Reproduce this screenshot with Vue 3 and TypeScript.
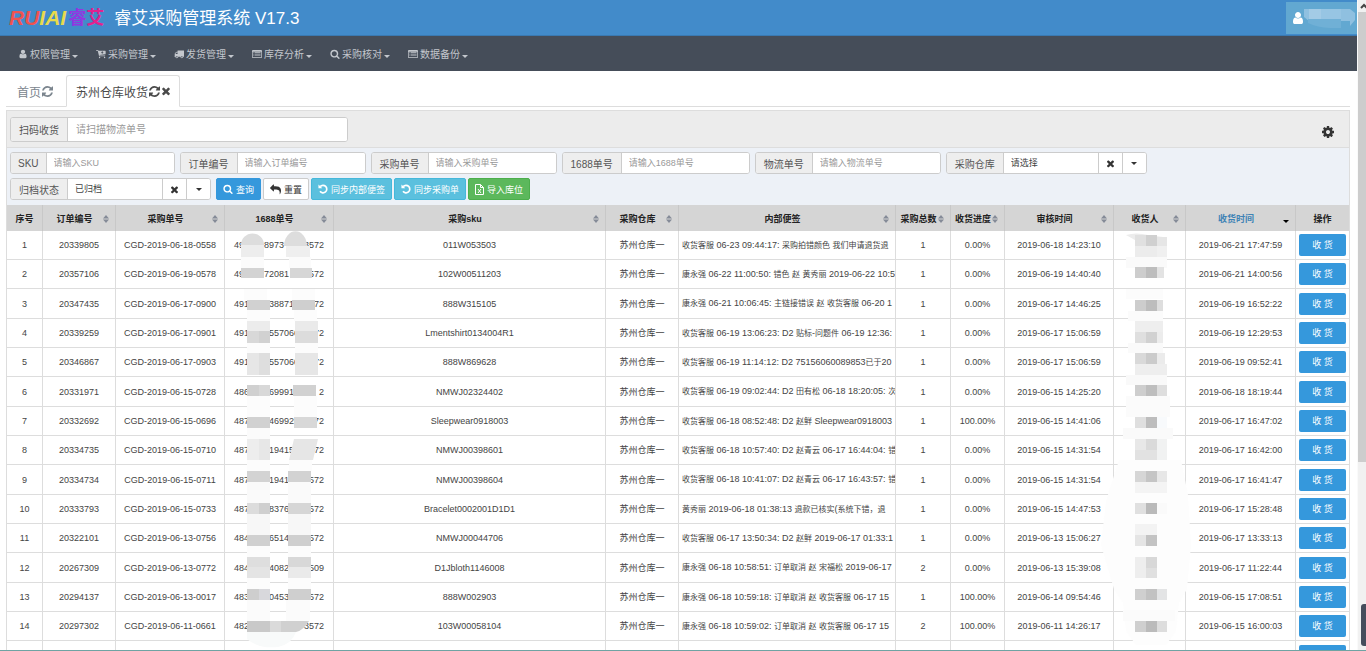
<script setup lang="ts">
import { ref } from 'vue'

type IconName = 'user' | 'cart' | 'truck' | 'list' | 'search'

interface NavItem { icon: IconName; label: string }
interface Field { id: string; label: string; hint: string }
interface Column { key: string; label: string; sortable: boolean }
interface Row {
  order: string
  purchase: string
  head: string
  mid: string
  tail: string
  sku: string
  memo: string
  total: string
  progress: string
  audit: string
  received: string
  early?: boolean
}
type Block = [number, number, number, number, string]

const paths: Record<string, string> = {
  user: 'M1536 1399q0 109-62.5 187t-150.5 78h-854q-88 0-150.5-78t-62.5-187q0-85 8.5-160.5t31.5-152 58.5-131 94-89 134.5-34.5q131 128 313 128t313-128q76 0 134.5 34.5t94 89 58.5 131 31.5 152 8.5 160.5zm-256-887q0 159-112.5 271.5t-271.5 112.5-271.5-112.5-112.5-271.5 112.5-271.5 271.5-112.5 271.5 112.5 112.5 271.5z',
  cart: 'M64 192h300q50 0 60 56l14 72h1226q64 0 64 64v512q0 56-58 64l-1044 122 20 70h954q64 0 64 64t-64 64H600q-58 0-70-60L310 320H64q-64 0-64-64t64-64zM1050 400v180H870l250 250 250-250h-180V400zM640 1408a128 128 0 1 1 0 256 128 128 0 0 1 0-256zM1536 1408a128 128 0 1 1 0 256 128 128 0 0 1 0-256z',
  truck: 'M640 1408q0-52-38-90t-90-38-90 38-38 90 38 90 90 38 90-38 38-90zm-384-512h384v-256h-158q-13 0-22 9l-195 195q-9 9-9 22v30zm1280 512q0-52-38-90t-90-38-90 38-38 90 38 90 90 38 90-38 38-90zm256-1088v1024q0 15-4 26.5t-13.5 18.5-16.5 11.5-23.5 6-22.5 2-25.5 0-22.5-.5q0 106-75 181t-181 75-181-75-75-181h-384q0 106-75 181t-181 75-181-75-75-181h-64q-3 0-22.5.5t-25.5 0-22.5-2-23.5-6-16.5-11.5-13.5-18.5-4-26.5q0-26 19-45t45-19v-320q0-8-.5-35t0-38 2.5-34.5 6.5-37 14-30.5 22.5-30l198-198q19-19 50.5-32t58.5-13h160v-192q0-26 19-45t45-19h1024q26 0 45 19t19 45z',
  list: 'M160 192h1472q160 0 160 160v1088q0 160-160 160H160q-160 0-160-160V352q0-160 160-160zM128 512v896q0 64 64 64h1408q64 0 64-64V512zM256 600h160v130H256zM512 600h1024v130H512zM256 850h160v130H256zM512 850h1024v130H512zM256 1100h160v130H256zM512 1100h1024v130H512z',
  search: 'M1216 832q0-185-131.5-316.5t-316.5-131.5-316.5 131.5-131.5 316.5 131.5 316.5 316.5 131.5 316.5-131.5 131.5-316.5zm512 832q0 52-38 90t-90 38q-54 0-90-38l-343-342q-179 124-399 124-143 0-273.5-55.5t-225-150-150-225-55.5-273.5 55.5-273.5 150-225 225-150 273.5-55.5 273.5 55.5 225 150 150 225 55.5 273.5q0 220-124 399l343 343q37 37 37 90z',
  refresh: 'M1639 1056q0 5-1 7-64 268-268 434.5t-478 166.5q-146 0-282.5-55t-243.5-157l-129 129q-19 19-45 19t-45-19-19-45v-448q0-26 19-45t45-19h448q26 0 45 19t19 45-19 45l-137 137q71 66 161 102t187 36q134 0 250-65t186-179q11-17 53-117 8-23 30-23h192q13 0 22.5 9.5t9.5 22.5zm25-800v448q0 26-19 45t-45 19h-448q-26 0-45-19t-19-45 19-45l138-138q-148-137-349-137-134 0-250 65t-186 179q-11 17-53 117-8 23-30 23h-199q-13 0-22.5-9.5t-9.5-22.5v-7q65-268 270-434.5t480-166.5q146 0 284 55.5t245 156.5l130-129q19-19 45-19t45 19 19 45z',
  times: 'M1490 1322q0 40-28 68l-136 136q-28 28-68 28t-68-28l-294-294-294 294q-28 28-68 28t-68-28l-136-136q-28-28-28-68t28-68l294-294-294-294q-28-28-28-68t28-68l136-136q28-28 68-28t68 28l294 294 294-294q28-28 68-28t68 28l136 136q28 28 28 68t-28 68l-294 294 294 294q28 28 28 68z',
  cog: 'M1152 896q0-106-75-181t-181-75-181 75-75 181 75 181 181 75 181-75 75-181zm512-109v222q0 12-8 23t-20 13l-185 28q-19 54-39 91 35 50 107 138 10 12 10 25t-9 23q-27 37-99 108t-94 71q-12 0-26-9l-138-108q-44 23-91 38-16 136-29 186-7 28-36 28h-222q-14 0-24.5-8.5t-11.5-21.5l-28-184q-49-16-90-37l-141 107q-10 9-25 9-14 0-25-11-126-114-165-168-7-10-7-23 0-12 8-23 15-21 51-66.5t54-70.5q-27-50-41-99l-183-27q-13-2-21-12.5t-8-23.5v-222q0-12 8-23t19-13l186-28q14-46 39-92-40-57-107-138-10-12-10-24 0-10 9-23 26-36 98.5-107.5t94.5-71.5q13 0 26 10l138 107q44-23 91-38 16-136 29-186 7-28 36-28h222q14 0 24.5 8.5t11.5 21.5l28 184q49 16 90 37l142-107q9-9 24-9 13 0 25 10 129 119 165 170 7 8 7 22 0 12-8 23-15 21-51 66.5t-54 70.5q26 50 41 98l183 28q13 2 21 12.5t8 23.5z',
  reply: 'M0 640q0 26 19 45l512 512q19 19 45 19t45-19 19-45V896h224q98 0 175.500 6t154 21.500 133 42.500 105.500 69.500 80 101 48.500 138.500 17.500 181q0 55-5 123 0 6-2.500 23.500t-2.500 26.500q0 15 8.500 25t23.500 10q16 0 28-17 7-9 13-22t13.500-30 10.500-24q127-285 127-451 0-199-53-333-162-403-875-403H640V128q0-26-19-45t-45-19-45 19L19 595q-19 19-19 45z',
}

const nav: NavItem[] = [
  { icon: 'user', label: '权限管理' },
  { icon: 'cart', label: '采购管理' },
  { icon: 'truck', label: '发货管理' },
  { icon: 'list', label: '库存分析' },
  { icon: 'search', label: '采购核对' },
  { icon: 'list', label: '数据备份' },
]

const fields: Field[] = [
  { id: 'sku', label: 'SKU', hint: '请输入SKU' },
  { id: 'order', label: '订单编号', hint: '请输入订单编号' },
  { id: 'purchase', label: '采购单号', hint: '请输入采购单号' },
  { id: 'ali', label: '1688单号', hint: '请输入1688单号' },
  { id: 'logistics', label: '物流单号', hint: '请输入物流单号' },
]

const columns: Column[] = [
  { key: 'no', label: '序号', sortable: false },
  { key: 'order', label: '订单编号', sortable: true },
  { key: 'purchase', label: '采购单号', sortable: true },
  { key: 'ali', label: '1688单号', sortable: true },
  { key: 'sku', label: '采购sku', sortable: true },
  { key: 'depot', label: '采购仓库', sortable: true },
  { key: 'memo', label: '内部便签', sortable: true },
  { key: 'total', label: '采购总数', sortable: true },
  { key: 'progress', label: '收货进度', sortable: true },
  { key: 'audit', label: '审核时间', sortable: true },
  { key: 'person', label: '收货人', sortable: true },
  { key: 'received', label: '收货时间', sortable: true },
  { key: 'action', label: '操作', sortable: false },
]
const sortKey = ref('received')

// Splits a note into Chinese and Latin runs, which are set in different sizes.
const runs = (memo: string): { text: string; han: boolean }[] =>
  (memo.match(/[\u4e00-\u9fff，]+|[^\u4e00-\u9fff，]+/g) ?? []).map((text) => ({
    text,
    han: /[\u4e00-\u9fff，]/.test(text),
  }))

const rows: Row[] = [
  { order: '20339805', purchase: 'CGD-2019-06-18-0558', head: '49', mid: '8973', tail: '3572', sku: '011W053503', memo: '收货客服 06-23 09:44:17: 采购拍错颜色 我们申请退货退', total: '1', progress: '0.00%', audit: '2019-06-18 14:23:10', received: '2019-06-21 17:47:59', early: true },
  { order: '20357106', purchase: 'CGD-2019-06-19-0578', head: '49', mid: '72081', tail: '572', sku: '102W00511203', memo: '康永强 06-22 11:00:50: 错色 赵 黄秀丽 2019-06-22 10:5', total: '1', progress: '0.00%', audit: '2019-06-19 14:40:40', received: '2019-06-21 14:00:56', early: true },
  { order: '20347435', purchase: 'CGD-2019-06-17-0900', head: '491', mid: '38871', tail: '72', sku: '888W315105', memo: '康永强 06-21 10:06:45: 主链接错误 赵 收货客服 06-20 1', total: '1', progress: '0.00%', audit: '2019-06-17 14:46:25', received: '2019-06-19 16:52:22' },
  { order: '20339259', purchase: 'CGD-2019-06-17-0901', head: '491', mid: '557066', tail: '72', sku: 'Lmentshirt0134004R1', memo: '收货客服 06-19 13:06:23: D2 贴标-问题件 06-19 12:36:', total: '1', progress: '0.00%', audit: '2019-06-17 15:06:59', received: '2019-06-19 12:29:53' },
  { order: '20346867', purchase: 'CGD-2019-06-17-0903', head: '491', mid: '557060', tail: '72', sku: '888W869628', memo: '收货客服 06-19 11:14:12: D2 75156060089853已于20', total: '1', progress: '0.00%', audit: '2019-06-17 15:06:59', received: '2019-06-19 09:52:41' },
  { order: '20331971', purchase: 'CGD-2019-06-15-0728', head: '486', mid: '699910', tail: '2', sku: 'NMWJ02324402', memo: '收货客服 06-19 09:02:44: D2 田有松 06-18 18:20:05: 次', total: '1', progress: '0.00%', audit: '2019-06-15 14:25:20', received: '2019-06-18 18:19:44' },
  { order: '20332692', purchase: 'CGD-2019-06-15-0696', head: '487', mid: '469920', tail: '72', sku: 'Sleepwear0918003', memo: '收货客服 06-18 08:52:48: D2 赵鲜 Sleepwear0918003', total: '1', progress: '100.00%', audit: '2019-06-15 14:41:06', received: '2019-06-17 16:47:02' },
  { order: '20334735', purchase: 'CGD-2019-06-15-0710', head: '487', mid: '19415', tail: '72', sku: 'NMWJ00398601', memo: '收货客服 06-18 10:57:40: D2 赵青云 06-17 16:44:04: 错', total: '1', progress: '0.00%', audit: '2019-06-15 14:31:54', received: '2019-06-17 16:42:00' },
  { order: '20334734', purchase: 'CGD-2019-06-15-0711', head: '487', mid: '1941', tail: '572', sku: 'NMWJ00398604', memo: '收货客服 06-18 10:41:07: D2 赵青云 06-17 16:43:57: 错', total: '1', progress: '0.00%', audit: '2019-06-15 14:31:54', received: '2019-06-17 16:41:47' },
  { order: '20333793', purchase: 'CGD-2019-06-15-0733', head: '487', mid: '8376', tail: '572', sku: 'Bracelet0002001D1D1', memo: '黄秀丽 2019-06-18 01:38:13 退款已核实(系统下错，退', total: '1', progress: '0.00%', audit: '2019-06-15 14:47:53', received: '2019-06-17 15:28:48' },
  { order: '20322101', purchase: 'CGD-2019-06-13-0756', head: '484', mid: '6514', tail: '572', sku: 'NMWJ00044706', memo: '收货客服 06-17 13:50:34: D2 赵鲜 2019-06-17 01:33:1', total: '1', progress: '0.00%', audit: '2019-06-13 15:06:27', received: '2019-06-17 13:33:13' },
  { order: '20267309', purchase: 'CGD-2019-06-13-0772', head: '484', mid: '4082', tail: '509', sku: 'D1Jbloth1146008', memo: '康永强 06-18 10:58:51: 订单取消 赵 宋福松 2019-06-17', total: '2', progress: '0.00%', audit: '2019-06-13 15:39:08', received: '2019-06-17 11:22:44' },
  { order: '20294137', purchase: 'CGD-2019-06-13-0017', head: '483', mid: '0453', tail: '572', sku: '888W002903', memo: '康永强 06-18 10:59:18: 订单取消 赵 收货客服 06-17 15', total: '1', progress: '100.00%', audit: '2019-06-14 09:54:46', received: '2019-06-15 17:08:51' },
  { order: '20297302', purchase: 'CGD-2019-06-11-0661', head: '482', mid: '', tail: '3572', sku: '103W00058104', memo: '康永强 06-18 10:59:02: 订单取消 赵 收货客服 06-17 15', total: '2', progress: '100.00%', audit: '2019-06-11 14:26:17', received: '2019-06-15 16:00:03' },
]

// Privacy covers, measured from the first body row.
const aliBlocks: Block[] = [
  [17, 14, 23, 12, '#ededed'], [62, 15, 24, 11, '#efefef'],
  [17, 26, 23, 11, '#fbfbfb'], [65, 26, 22, 11, '#fbfbfb'],
  [17, 37, 23, 10, '#d3d3d3'], [66, 37, 22, 10, '#d6d6d6'],
  [20, 58, 23, 11, '#fcfcfc'], [68, 58, 23, 11, '#fcfcfc'],
  [23, 69, 23, 10, '#d1d1d1'], [68, 69, 23, 10, '#cfcfcf'],
  [23, 79, 23, 11, '#fcfcfc'], [70, 79, 23, 11, '#fcfcfc'],
  [23, 90, 23, 10, '#ececec'], [71, 90, 23, 10, '#eaeaea'],
  [23, 100, 12, 12, '#d8d8d8'], [35, 100, 11, 12, '#d1d1d1'], [71, 100, 23, 12, '#dcdcdc'],
  [23, 112, 23, 10, '#fcfcfc'], [71, 112, 23, 10, '#fcfcfc'],
  [23, 122, 12, 22, '#e6e6e6'], [35, 122, 11, 22, '#dedede'], [71, 122, 23, 22, '#e6e6e6'],
  [23, 154, 12, 11, '#d0d0d0'], [35, 154, 11, 11, '#d8d8d8'], [69, 154, 23, 11, '#d1d1d1'],
  [23, 165, 23, 21, '#fcfcfc'], [70, 165, 23, 21, '#fcfcfc'],
  [23, 186, 23, 11, '#d1d1d1'], [70, 186, 23, 11, '#d8d8d8'],
  [23, 197, 23, 11, '#fbfbfb'],
  [23, 208, 12, 21, '#ededed'], [35, 208, 11, 21, '#e7e7e7'],
  [23, 229, 23, 11, '#fcfcfc'], [65, 229, 23, 11, '#fcfcfc'],
  [23, 240, 23, 11, '#d3d3d3'], [64, 240, 23, 11, '#d2d2d2'],
  [23, 251, 23, 21, '#fafafa'], [64, 251, 23, 21, '#fafafa'],
  [23, 272, 12, 11, '#dcdcdc'], [35, 272, 11, 11, '#cfcfcf'], [64, 272, 23, 11, '#d6d6d6'],
  [23, 283, 23, 21, '#f7f7f7'], [64, 283, 23, 21, '#f7f7f7'],
  [23, 304, 23, 11, '#d0d0d0'], [64, 304, 23, 11, '#cfcfcf'],
  [23, 315, 23, 11, '#fcfcfc'], [64, 315, 23, 11, '#fcfcfc'],
  [23, 326, 23, 10, '#dedede'], [64, 326, 23, 10, '#d8d8d8'],
  [23, 336, 23, 11, '#e4e4e4'], [64, 336, 23, 11, '#eaeaea'],
  [23, 347, 23, 11, '#fcfcfc'], [64, 347, 23, 11, '#fcfcfc'],
  [23, 358, 12, 11, '#cecece'], [35, 358, 11, 11, '#d8d8dc'], [64, 358, 23, 11, '#cfcfcf'],
  [23, 369, 23, 21, '#fbfbfb'], [62, 369, 24, 21, '#fbfbfb'],
  [23, 390, 23, 11, '#c9c9c9'], [46, 390, 11, 11, '#dadada'],
]

const personBlocks: Block[] = [
  [31, 4, 11, 11, '#e0e0e0'], [42, 4, 11, 11, '#d0d0d0'], [53, 6, 10, 9, '#e6e6e6'],
  [31, 15, 22, 11, '#ececec'], [53, 15, 10, 11, '#f0f0f0'], [22, 26, 41, 11, '#fafafa'],
  [31, 36, 11, 11, '#cdcdcd'], [42, 36, 11, 11, '#bdbdbd'], [53, 36, 7, 11, '#e3e3e3'],
  [22, 58, 37, 10, '#fcfcfc'],
  [31, 69, 11, 11, '#cdcdcd'], [42, 69, 11, 11, '#bdbdbd'], [53, 69, 6, 11, '#dedede'],
  [24, 80, 35, 10, '#fbfbfb'],
  [31, 90, 28, 11, '#eeeeee'], [31, 101, 11, 11, '#dfdfdf'], [42, 101, 11, 11, '#d1d1d1'], [53, 101, 6, 11, '#ececec'],
  [24, 112, 35, 10, '#fafafa'],
  [31, 122, 11, 11, '#d9d9d9'], [42, 122, 11, 11, '#cbcbcb'], [53, 122, 8, 11, '#ebebeb'], [31, 133, 32, 11, '#eeeeee'],
  [22, 144, 41, 10, '#f9f9f9'],
  [31, 154, 11, 11, '#cecece'], [42, 154, 11, 11, '#bebebe'], [53, 154, 10, 11, '#dedede'],
  [22, 165, 44, 21, '#fbfbfb'],
  [31, 186, 11, 11, '#dfdfdf'], [42, 186, 11, 11, '#bdbdbd'], [53, 186, 10, 11, '#f8fafc'],
  [19, 197, 50, 11, '#fafafa'],
  [31, 208, 11, 11, '#e8e8e8'], [42, 208, 11, 11, '#dadada'], [53, 208, 10, 21, '#f1f2f2'], [31, 219, 22, 10, '#e2e2e2'],
  [31, 240, 11, 11, '#d6d6d6'], [42, 240, 11, 11, '#c5c5c5'], [53, 240, 10, 11, '#e7e7e7'], [31, 251, 32, 11, '#f4f4f4'],
  [31, 272, 11, 11, '#e0e0e0'], [42, 272, 11, 11, '#bababa'], [53, 272, 10, 11, '#fafafa'],
  [31, 293, 22, 11, '#f3f3f3'], [31, 304, 11, 11, '#e5e5e5'], [42, 304, 11, 11, '#c3c3c3'],
  [31, 326, 11, 21, '#eeeeee'], [42, 326, 11, 11, '#d8d8d8'], [42, 337, 11, 10, '#e0e0e0'],
  [31, 358, 11, 11, '#cfcfcf'], [42, 358, 11, 11, '#c2c2c2'], [53, 358, 10, 11, '#e3e4e5'],
  [19, 379, 52, 11, '#fbfbfb'],
  [31, 390, 11, 11, '#cfcfcf'], [42, 390, 11, 11, '#bbbbbb'], [53, 390, 10, 11, '#dddddd'],
]
</script>

<template>
  <div class="shell">
    <div class="page">
      <header class="top">
        <a class="brand" href="#" aria-label="RUIAI睿艾">
          <span class="red">RU</span><span class="yellow">IAI</span><span class="purple">睿</span><span class="pink">艾</span>
        </a>
        <h1>睿艾采购管理系统 V17.3</h1>
        <button class="account" type="button" aria-label="账户">
          <svg width="12" height="14" viewBox="128 0 1536 1792"><path :d="paths.user" fill="#fff" /></svg>
          <svg class="veil" width="52" height="20" viewBox="0 0 52 20">
            <path d="M0 1h46l5 4v7l-5 6v-5H5L0 9z" fill="#8fc0e0" />
            <path d="M5 1h12v10H5z" fill="#a3cbe6" /><path d="M17 1h20v10H17z" fill="#97c5e3" />
            <path d="M4 11h33v9q-20 1-33-5z" fill="#70b0d6" />
          </svg>
        </button>
      </header>

      <nav class="menu">
        <button v-for="item in nav" :key="item.label" type="button">
          <svg width="10" height="10" viewBox="0 0 1792 1792"><path :d="paths[item.icon]" fill="currentColor" fill-rule="evenodd" /></svg>
          <span>{{ item.label }}</span>
          <i class="caret"></i>
        </button>
      </nav>

      <div class="tabs">
        <a class="tab" href="#">首页
          <svg width="11" height="11" viewBox="128 128 1536 1536"><path :d="paths.refresh" fill="currentColor" /></svg>
        </a>
        <a class="tab active" href="#">苏州仓库收货
          <svg width="11" height="11" viewBox="128 128 1536 1536"><path :d="paths.refresh" fill="currentColor" /></svg>
          <svg width="10" height="10" viewBox="128 128 1536 1536"><path :d="paths.times" fill="currentColor" /></svg>
        </a>
      </div>

      <main class="panel">
        <div class="scan">
          <div class="group tall">
            <label for="scan">扫码收货</label>
            <input id="scan" type="text" placeholder="请扫描物流单号">
          </div>
          <button class="gear" type="button" aria-label="设置">
            <svg width="14" height="14" viewBox="0 0 1792 1792"><path :d="paths.cog" fill="#333" /></svg>
          </button>
        </div>

        <form class="filters" @submit.prevent>
          <div class="line">
            <div v-for="f in fields" :key="f.id" class="group" :class="f.id">
              <label :for="f.id">{{ f.label }}</label>
              <input :id="f.id" type="text" :placeholder="f.hint">
            </div>
            <div class="group">
              <label for="depot">采购仓库</label>
              <select id="depot"><option>请选择</option></select>
              <button type="button" aria-label="清除仓库"><svg width="9" height="9" viewBox="128 128 1536 1536"><path :d="paths.times" fill="#333" /></svg></button>
              <button type="button" aria-label="展开仓库"><i class="caret"></i></button>
            </div>
          </div>
          <div class="line">
            <div class="group">
              <label for="archive">归档状态</label>
              <select id="archive"><option>已归档</option></select>
              <button type="button" aria-label="清除状态"><svg width="9" height="9" viewBox="128 128 1536 1536"><path :d="paths.times" fill="#333" /></svg></button>
              <button type="button" aria-label="展开状态"><i class="caret"></i></button>
            </div>
            <div class="actions">
              <button class="btn blue" type="submit">
                <svg width="10" height="10" viewBox="0 0 1792 1792"><path :d="paths.search" fill="#fff" /></svg>查询
              </button>
              <button class="btn plain" type="reset">
                <svg width="11" height="11" viewBox="0 0 1792 1792"><path :d="paths.reply" fill="#333" /></svg>重置
              </button>
              <button v-for="label in ['同步内部便签', '同步采购单']" :key="label" class="btn cyan" type="button">
                <svg width="10" height="10" viewBox="0 0 12 12"><path d="M2.600 3.200A4.500 4.500 0 1 1 2.400 8.800" fill="none" stroke="#fff" stroke-width="2" /><path d="M.5.500v4.700h4.700z" fill="#fff" /></svg>{{ label }}
              </button>
              <button class="btn green" type="button">
                <svg width="9" height="11" viewBox="0 0 9 11"><path d="M.5.500h5l3 3v7h-8zM5.500.500v3h3" fill="none" stroke="#fff" /><path d="M3 5l3 4M6 5L3 9" stroke="#fff" /></svg>导入库位
              </button>
            </div>
          </div>
        </form>

        <div class="grid">
          <table>
            <colgroup>
              <col v-for="c in columns" :key="c.key" :class="'w-' + c.key">
            </colgroup>
            <thead>
              <tr>
                <th v-for="c in columns" :key="c.key" scope="col">
                  <button v-if="c.sortable" type="button" :class="{ current: sortKey === c.key }" @click="sortKey = c.key">
                    {{ c.label }}
                    <i v-if="sortKey === c.key" class="caret"></i>
                    <svg v-else width="6" height="8" viewBox="0 0 6 8"><path d="M3 0l3 3.500H0zM0 4.500h6L3 8z" fill="#858b98" /></svg>
                  </button>
                  <template v-else>{{ c.label }}</template>
                </th>
              </tr>
            </thead>
            <tbody>
              <tr v-for="(r, i) in rows" :key="r.order">
                <td>{{ i + 1 }}</td>
                <td>{{ r.order }}</td>
                <td>{{ r.purchase }}</td>
                <td><div class="code" :class="{ early: r.early }"><span>{{ r.head }}</span><span>{{ r.mid }}</span><span>{{ r.tail }}</span></div></td>
                <td>{{ r.sku }}</td>
                <td>苏州仓库一</td>
                <td><div class="memo"><span v-for="(run, n) in runs(r.memo)" :key="n" :class="{ han: run.han }">{{ run.text }}</span></div></td>
                <td>{{ r.total }}</td>
                <td>{{ r.progress }}</td>
                <td>{{ r.audit }}</td>
                <td></td>
                <td>{{ r.received }}</td>
                <td><button class="take" type="button">收 货</button></td>
              </tr>
              <tr>
                <td v-for="n in 12" :key="n"></td>
                <td><button class="take" type="button">收 货</button></td>
              </tr>
            </tbody>
          </table>

          <svg class="cover ali" width="109" height="420" viewBox="0 0 109 420" aria-hidden="true">
            <path d="M17 14a11 11 0 0 1 23 0z" fill="#dddddd" /><path d="M60 15a11 14 0 0 1 23 0z" fill="#dddddd" />
            <rect v-for="(b, i) in aliBlocks" :key="i" :x="b[0]" :y="b[1]" :width="b[2]" :height="b[3]" :fill="b[4]" />
            <path d="M70 208h24l-5 21H65z" fill="#e6e6e6" />
            <path d="M57 390h28q-5 9-13 11H57z" fill="#d0d0d0" />
            <path d="M23 401h49q-4 12-18 15-20 2-31-8z" fill="#f8fafa" />
          </svg>
          <svg class="cover person" width="90" height="420" viewBox="0 0 90 420" aria-hidden="true">
            <path d="M15 229h62l7 35 3 50-4 44-8 14-3 28-10 14H32l-10-14-3-28-9-14L-3 314 2 270z" fill="#fdfdfd" />
            <path d="M22 4q10-3 22 0l15 2v3H31z" fill="#ececec" />
            <rect v-for="(b, i) in personBlocks" :key="i" :x="b[0]" :y="b[1]" :width="b[2]" :height="b[3]" :fill="b[4]" />
          </svg>
        </div>
      </main>
    </div>

    <div class="bar" aria-hidden="true">
      <svg width="8" height="12" viewBox="0 0 8 12"><path d="M3 8l3-3 3 3" fill="none" stroke="#444" stroke-width="2" /></svg>
      <div class="thumb"></div>
      <div class="gadget"></div>
    </div>
    <div class="edge"></div>
  </div>
</template>

<style>
html,
body {
  margin: 0;
  background: #fff;
}
</style>

<style scoped>
.shell {
  position: relative;
  display: flex;
  height: 100vh;
  overflow: hidden;
  color: #444;
  font-family: "Liberation Sans", "Noto Sans CJK SC", sans-serif;
  font-size: 9px;
}
.shell * { box-sizing: border-box; }
button, input, select {
  margin: 0;
  font: inherit;
  color: inherit;
}
button { cursor: pointer; }
svg { flex: none; display: block; }
a { color: inherit; text-decoration: none; }
.page { flex: 1; min-width: 0; }

.caret {
  flex: none;
  width: 0;
  height: 0;
  border: 3px solid transparent;
  border-top-color: currentColor;
  border-bottom: 0;
}

.top {
  display: flex;
  align-items: center;
  height: 36px;
  padding-left: 9px;
  background: #428bca;
  border-bottom: 1px solid #3a79b1;
  color: #fff;
}
.brand {
  display: flex;
  align-items: center;
  font-size: 21px;
  line-height: 30px;
  font-weight: bold;
  font-style: italic;
}
.red { color: #ef5350; }
.yellow { color: #e9da4c; }
.purple, .pink { font-size: 18px; font-style: normal; }
.purple { margin-left: 2px; color: #9138e0; }
.pink { color: #e3218f; }
h1 {
  flex: 1;
  margin: 2px 0 0 10px;
  font-size: 17px;
  line-height: 30px;
  font-weight: normal;
}
.account {
  display: flex;
  align-items: center;
  width: 71px;
  height: 32px;
  padding: 0 0 0 6px;
  border: 0;
  background: #62a8d1;
}

.menu {
  display: flex;
  height: 35px;
  padding-left: 9px;
  background: #454d59;
  color: #c3c7cd;
}
.menu button {
  display: flex;
  align-items: center;
  gap: 2px;
  width: 78px;
  padding: 0 0 0 9px;
  border: 0;
  background: none;
  font-size: 10px;
}
.menu .caret { margin-top: 6px; }

.tabs {
  display: flex;
  align-items: flex-end;
  height: 36px;
  margin: 0 7px 0 6px;
  border-bottom: 1px solid #ddd;
}
.tab {
  display: flex;
  align-items: center;
  gap: 1px;
  height: 32px;
  padding: 0 12px 0 10px;
  margin-bottom: -1px;
  border: 1px solid transparent;
  border-radius: 3px 3px 0 0;
  color: #7b858e;
  font-size: 12px;
}
.tab.active {
  padding: 0 8px 0 9px;
  border-color: #ddd;
  border-bottom-color: #fff;
  background: #fff;
  color: #4a4a4a;
}

.panel {
  margin: 3px 7px 0 6px;
  border: 1px solid #ddd;
  border-bottom: 0;
}
.scan {
  display: flex;
  align-items: center;
  justify-content: space-between;
  height: 37px;
  padding: 0 14px 0 3px;
  background: #ececec;
  border-bottom: 1px solid #ddd;
}
.gear { padding: 0; margin-top: 6px; border: 0; background: none; }

.group {
  display: flex;
  height: 22px;
  border: 1px solid #ccc;
  border-radius: 3px;
  background: #fff;
  overflow: hidden;
}
.group.tall { height: 25px; }
.group label {
  display: flex;
  align-items: center;
  padding: 0 8px;
  border-right: 1px solid #ccc;
  background: #eee;
  color: #555;
  font-size: 10px;
  white-space: nowrap;
}
.group.sku label { padding: 0 7px; }
.group input, .group select {
  width: 127px;
  padding: 0 7px;
  border: 0;
  outline: 0;
  background: #fff;
}
.group select { width: 94px; appearance: none; }
.group.tall input { width: 279px; padding: 0 8px; font-size: 10px; }
.group input::placeholder { color: #999; opacity: 1; }
.group button {
  display: flex;
  align-items: center;
  justify-content: center;
  width: 24px;
  padding: 0;
  border: 0;
  border-left: 1px solid #ccc;
  background: #fff;
  color: #333;
}

.filters {
  display: flex;
  flex-direction: column;
  gap: 4px;
  padding: 4px 3px 5px;
  background: #edf1f7;
}
.line { display: flex; gap: 5px; }
.actions { display: flex; gap: 2px; }
.btn {
  display: flex;
  align-items: center;
  gap: 3px;
  height: 22px;
  padding: 0 6px;
  border: 1px solid;
  border-radius: 2px;
  color: #fff;
  white-space: nowrap;
}
.blue { background: #3598dc; border-color: #3598dc; }
.plain { background: #fff; border-color: #ccc; color: #333; }
.cyan { background: #5bc0de; border-color: #46b8da; }
.green { background: #5cb85c; border-color: #4cae4c; }

.grid { position: relative; }
table {
  width: 100%;
  table-layout: fixed;
  border-collapse: separate;
  border-spacing: 0;
}
.w-no { width: 36px; }
.w-order, .w-depot { width: 73px; }
.w-purchase, .w-ali, .w-audit { width: 109px; }
.w-memo { width: 217px; }
.w-total { width: 55px; }
.w-progress { width: 54px; }
.w-person { width: 72px; }
.w-received { width: 110px; }
.w-action { width: 53px; }
th, td {
  padding: 0;
  border-right: 1px solid #ddd;
  text-align: center;
  white-space: nowrap;
}
th:last-child, td:last-child { border-right: 0; }
th {
  height: 26px;
  background: #d5d5d5;
  border-right-color: #c8c8c8;
  color: #222;
}
th button {
  position: relative;
  display: block;
  width: 100%;
  height: 26px;
  padding: 0 9px 0 0;
  border: 0;
  background: none;
}
th svg { position: absolute; top: 10px; right: 6px; }
th .caret { position: absolute; top: 15px; right: 6px; color: #000; }
th .current { color: #3f83b5; }
td { height: 29px; border-bottom: 1px solid #ddd; line-height: 12px; }
tr:nth-child(3n) td { height: 30px; }
.code {
  display: grid;
  grid-template-columns: 35px 1fr auto;
  width: 90px;
  margin: 0 auto;
  text-align: left;
}
.code.early { grid-template-columns: 30px 1fr auto; }
.memo { padding-left: 3px; overflow: hidden; text-align: left; white-space: pre; }
.han { font-size: 8px; }
.take {
  display: block;
  width: 47px;
  height: 22px;
  margin: 0 auto;
  padding: 0;
  border: 0;
  border-radius: 2px;
  background: #3598dc;
  color: #fff;
}
.cover { position: absolute; top: 26px; pointer-events: none; }
.ali { left: 217px; }
.person { right: 155px; overflow: visible; }

.bar {
  position: relative;
  width: 9px;
  background: #f1f1f1;
  border-left: 1px solid #fafafa;
}
.thumb { height: calc(69vh + 1px); background: #cdcdcd; }
.gadget {
  position: absolute;
  right: 0;
  bottom: 5px;
  width: 5px;
  height: 42px;
  border-radius: 3px 0 0 3px;
  background: #454d5c;
}
.edge {
  position: absolute;
  left: 0;
  right: 0;
  bottom: 0;
  height: 1px;
  background: #6fa3a3;
}
</style>
